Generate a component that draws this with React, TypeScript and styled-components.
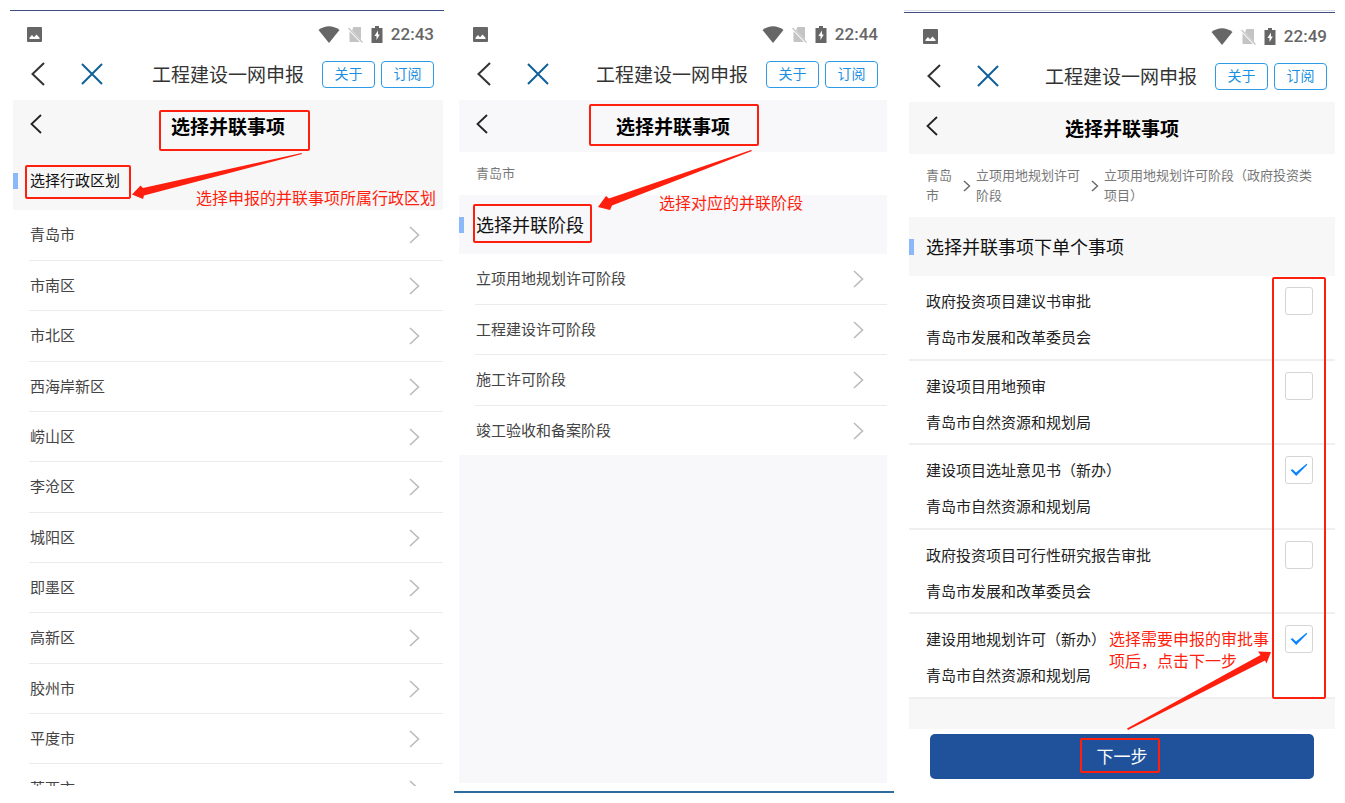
import React from "react";
import styled, { createGlobalStyle, css } from "styled-components";

const RED = "#ff1f0f";

const GlobalStyle = createGlobalStyle`
  * { box-sizing: border-box; }
  body {
    margin: 0;
    background: #fff;
    font-family: Roboto, "Noto Sans CJK SC", sans-serif;
    color: #222;
  }
  button { font: inherit; margin: 0; padding: 0; border: 0; background: none; color: inherit; cursor: pointer; }
  svg { display: block; flex: none; }
`;

const Page = styled.main`
  display: grid;
  grid-template-columns: 434fr 440fr 431fr;
  column-gap: 10px;
  min-height: 100vh;
  padding: 10px 10px;
`;

type Rule = "top" | "doubleTop" | "bottom";

const Frame = styled.section<{ $rule: Rule }>`
  display: flex;
  min-width: 0;
  ${({ $rule }) =>
    $rule === "top" &&
    css`
      border-top: 1px solid #3f4f82;
      padding: 0 1px 0 3px;
    `}
  ${({ $rule }) =>
    $rule === "doubleTop" &&
    css`
      border-top: 1px solid #dcdce4;
      padding: 2px 0 0 5px;
      background: linear-gradient(#3f4f82, #3f4f82) 0 1px / 100% 1px no-repeat;
    `}
  ${({ $rule }) =>
    $rule === "bottom" &&
    css`
      border-bottom: 2px solid #2d6c9f;
      padding: 1px 7px 8px 5px;
    `}
`;

const Phone = styled.div<{ $tint: string; $edge: number }>`
  --tint: ${({ $tint }) => $tint};
  --edge: ${({ $edge }) => $edge}px;
  position: relative;
  display: flex;
  flex-direction: column;
  flex: 1;
  min-width: 0;
`;

const StatusBar = styled.div`
  display: flex;
  align-items: center;
  height: 46px;
  padding: 0 var(--edge) 0 14px;
  color: #666;
`;

const StatusIcons = styled.div`
  display: flex;
  align-items: center;
  gap: 8px;
  margin-left: auto;
`;

const Clock = styled.time`
  font: 500 17px/20px Roboto, sans-serif;
`;

const NavBar = styled.nav`
  display: flex;
  align-items: center;
  height: 43px;
  padding: 0 var(--edge) 9px 18px;
`;

const IconButton = styled.button`
  display: flex;
  & + & { margin-left: 36px; }
`;

const AppTitle = styled.span`
  margin: 0 18px 0 auto;
  padding-top: 3px;
  font-size: 19px;
  line-height: 28px;
  color: #333;
  white-space: nowrap;
`;

const PillButton = styled.button`
  width: 53px;
  height: 27px;
  border: 1px solid #2d9be6;
  border-radius: 4px;
  color: #1d8fe0;
  font-size: 14px;
  line-height: 25px;
  & + & { margin-left: 6px; }
`;

const PageHeader = styled.header`
  display: grid;
  grid-template-columns: 1fr auto 1fr;
  align-items: center;
  height: 52px;
  padding: 0 17px;
  background: var(--tint);
`;

const BackButton = styled.button`
  justify-self: start;
  padding-bottom: 4px;
`;

const PageTitle = styled.h1`
  position: relative;
  margin: 0;
  padding-top: 4px;
  font-size: 19px;
  line-height: 28px;
  font-weight: 700;
  color: #000;
`;

const Highlight = styled.span<{ $inset: string }>`
  position: absolute;
  inset: ${({ $inset }) => $inset};
  border: 2px solid ${RED};
  border-radius: 2px;
  pointer-events: none;
`;

const Crumbs = styled.nav<{ $tall?: boolean }>`
  display: flex;
  align-items: center;
  padding: ${({ $tall }) => ($tall ? "12px 20px 11px 17px" : "12px 17px 11px")};
  font-size: 13px;
  line-height: 20px;
  color: #777;
`;

const Crumb = styled.span<{ $chars?: number }>`
  ${({ $chars }) => ($chars ? `flex: none; width: ${$chars}em;` : "flex: 1; min-width: 0;")}
`;

const CrumbArrow = styled.span`
  margin: 0 5px 0 11px;
`;

const SectionHead = styled.div<{ $large?: boolean }>`
  display: flex;
  align-items: center;
  gap: 12px;
  height: ${({ $large }) => ($large ? 59 : 58)}px;
  background: var(--tint);
  &::before {
    content: "";
    width: 5px;
    height: 16px;
    background: #8bb8f8;
  }
`;

const SectionTitle = styled.h2<{ $large?: boolean }>`
  position: relative;
  margin: 0;
  padding-top: ${({ $large }) => ($large ? 2 : 0)}px;
  font-size: ${({ $large }) => ($large ? 18 : 15)}px;
  line-height: 26px;
  font-weight: 400;
  color: #111;
`;

const List = styled.ul`
  margin: 0;
  padding: 0 0 0 16px;
  list-style: none;
`;

const ListItem = styled.li<{ $cut?: boolean }>`
  height: 50px;
  border-bottom: 1px solid #ebebeb;
  &:first-child, &:nth-child(3n) { height: 51px; }
  &:last-child {
    height: ${({ $cut }) => ($cut ? 22 : 49)}px;
    border-bottom: 0;
    overflow: hidden;
  }
`;

const RowButton = styled.button`
  display: flex;
  align-items: center;
  justify-content: space-between;
  width: 100%;
  height: 49px;
  padding: 0 23px 0 1px;
  font-size: 15px;
  line-height: 24px;
  color: #444;
`;

const Filler = styled.div`
  flex: 1;
  background: var(--tint);
`;

const Checks = styled.div`
  position: relative;
`;

const CheckRow = styled.label`
  display: flex;
  align-items: flex-start;
  justify-content: space-between;
  height: 85px;
  padding: 8px 22px 0 17px;
  border-bottom: 2px solid #efefef;
  font-size: 15px;
  line-height: 36px;
  color: #222;
  &:nth-of-type(even) { height: 84px; }
`;

const Line = styled.span`
  display: block;
`;

const CheckCell = styled.span`
  display: grid;
  margin-top: 3px;
  > * { grid-area: 1 / 1; place-self: center; }
`;

const Check = styled.input`
  appearance: none;
  width: 28px;
  height: 28px;
  margin: 0;
  border: 1px solid #d5d5d5;
  border-radius: 3px;
  background: #fff;
  & + svg { visibility: hidden; pointer-events: none; }
  &:checked + svg { visibility: visible; }
`;

const ColumnMark = styled.span`
  position: absolute;
  top: 1px;
  right: 9px;
  bottom: 0;
  width: 54px;
  border: 2px solid ${RED};
  border-radius: 2px;
  pointer-events: none;
`;

const Gap = styled.div`
  height: 30px;
  background: var(--tint);
`;

const NextButton = styled.button`
  height: 45px;
  margin: 5px 21px 0;
  border-radius: 5px;
  background: #20529b;
  color: #fff;
  font-size: 17px;
  line-height: 24px;
`;

const NextLabel = styled.span`
  position: relative;
`;

const Note = styled.p<{ $top: number; $left?: number; $right?: number; $width?: number }>`
  position: absolute;
  top: ${({ $top }) => $top}px;
  ${({ $left }) => $left !== undefined && `left: ${$left}px;`}
  ${({ $right }) => $right !== undefined && `right: ${$right}px;`}
  ${({ $width }) => $width !== undefined && `width: ${$width}px;`}
  margin: 0;
  font-size: 16px;
  line-height: 22px;
  color: ${RED};
`;

const Arrow = styled.svg<{ $top: number; $left?: number; $right?: number }>`
  position: absolute;
  top: ${({ $top }) => $top}px;
  ${({ $left }) => $left !== undefined && `left: ${$left}px;`}
  ${({ $right }) => $right !== undefined && `right: ${$right}px;`}
  fill: ${RED};
  pointer-events: none;
`;

const Chevron = ({ w, h, color, back, stroke = 2 }: { w: number; h: number; color: string; back?: boolean; stroke?: number }) => (
  <svg width={w} height={h} viewBox={`0 0 ${w} ${h}`} fill="none" stroke={color} strokeWidth={stroke} aria-hidden="true">
    <path d={back ? `M${w - 1} 1L1.5 ${h / 2}L${w - 1} ${h - 1}` : `M1 1L${w - 1.5} ${h / 2}L1 ${h - 1}`} />
  </svg>
);

const Status = ({ time }: { time: string }) => (
  <StatusBar>
    <svg width="15" height="15" viewBox="0 0 15 15" aria-hidden="true">
      <rect width="15" height="15" rx="1" fill="#666" />
      <path d="M2.5 12V10.8L5 8L7 10.2L9.5 7.4L12.5 10.8V12Z" fill="#fff" />
    </svg>
    <StatusIcons>
      <svg width="22" height="17" viewBox="0 0 22 17" aria-hidden="true">
        <path d="M11 17L0.5 4Q11 -3.5 21.5 4Z" fill="#666" />
      </svg>
      <svg width="15" height="17" viewBox="0 0 15 17" aria-hidden="true">
        <path d="M5.5 1H13V14L4 4.2Z" fill="#c4c4c4" />
        <path d="M1.5 5.2L11.8 16H2.3Q1.5 16 1.5 15.2Z" fill="#c4c4c4" />
        <path d="M0.5 2L14.5 16.5" stroke="#c4c4c4" strokeWidth="1.2" />
      </svg>
      <svg width="12" height="17" viewBox="0 0 12 17" aria-hidden="true">
        <path d="M4 0H8V2H11.5V17H0.5V2H4Z" fill="#666" />
        <path d="M7 4.6L3.4 10H5.5V14L8.8 8.6H7Z" fill="#fff" />
      </svg>
      <Clock>{time}</Clock>
    </StatusIcons>
  </StatusBar>
);

const Top = ({ time, titleInset }: { time: string; titleInset?: string }) => (
  <>
    <Status time={time} />
    <NavBar>
      <IconButton aria-label="返回">
        <Chevron w={14} h={24} color="#333" back />
      </IconButton>
      <IconButton aria-label="关闭">
        <svg width="22" height="22" viewBox="0 0 22 22" stroke="#0f6199" strokeWidth="2" aria-hidden="true">
          <path d="M1 1L21 21M21 1L1 21" />
        </svg>
      </IconButton>
      <AppTitle>工程建设一网申报</AppTitle>
      <PillButton>关于</PillButton>
      <PillButton>订阅</PillButton>
    </NavBar>
    <PageHeader>
      <BackButton aria-label="返回上一级">
        <Chevron w={12} h={20} color="#222" back stroke={1.8} />
      </BackButton>
      <PageTitle>
        选择并联事项
        {titleInset && <Highlight $inset={titleInset} />}
      </PageTitle>
    </PageHeader>
  </>
);

const Rows = ({ items, cut }: { items: string[]; cut?: boolean }) => (
  <List>
    {items.map((name) => (
      <ListItem key={name} $cut={cut}>
        <RowButton>
          {name}
          <Chevron w={11} h={18} color="#bbb" stroke={1.6} />
        </RowButton>
      </ListItem>
    ))}
  </List>
);

const districts = ["青岛市", "市南区", "市北区", "西海岸新区", "崂山区", "李沧区", "城阳区", "即墨区", "高新区", "胶州市", "平度市", "莱西市"];
const stages = ["立项用地规划许可阶段", "工程建设许可阶段", "施工许可阶段", "竣工验收和备案阶段"];
const matters = [
  { name: "政府投资项目建议书审批", office: "青岛市发展和改革委员会", checked: false },
  { name: "建设项目用地预审", office: "青岛市自然资源和规划局", checked: false },
  { name: "建设项目选址意见书（新办）", office: "青岛市自然资源和规划局", checked: true },
  { name: "政府投资项目可行性研究报告审批", office: "青岛市发展和改革委员会", checked: false },
  { name: "建设用地规划许可（新办）", office: "青岛市自然资源和规划局", checked: true },
];

export default function App() {
  return (
    <>
      <GlobalStyle />
      <Page>
        <Frame $rule="top">
          <Phone $tint="#f7f7f7" $edge={9}>
            <Top time="22:43" titleInset="0 -25px -9px -12px" />
            <SectionHead>
              <SectionTitle>
                选择行政区划
                <Highlight $inset="-3px -11px -5px -5px" />
              </SectionTitle>
            </SectionHead>
            <Rows items={districts} cut />
            <Note $top={177} $right={7}>选择申报的并联事项所属行政区划</Note>
            <Arrow $top={141} $left={118} width="172" height="48" viewBox="0 0 172 48">
              <path d="M1 42.5L9.5 33.5L12 36L170.5 1L171 2L13 43.5L12 47Z" />
            </Arrow>
          </Phone>
        </Frame>

        <Frame $rule="bottom">
          <Phone $tint="#f8f7fa" $edge={9}>
            <Top time="22:44" titleInset="-6px -29px -4px -27px" />
            <Crumbs>
              <Crumb>青岛市</Crumb>
            </Crumbs>
            <SectionHead $large>
              <SectionTitle $large>
                选择并联阶段
                <Highlight $inset="-7px -8px -4px -3px" />
              </SectionTitle>
            </SectionHead>
            <Rows items={stages} />
            <Filler />
            <Note $top={182} $left={200}>选择对应的并联阶段</Note>
            <Arrow $top={138} $left={138} width="156" height="62" viewBox="0 0 156 62">
              <path d="M1 58L9 47L12 49.5L154 1L155 2L15 56.5L13 61Z" />
            </Arrow>
          </Phone>
        </Frame>

        <Frame $rule="doubleTop">
          <Phone $tint="#f7f7f7" $edge={8}>
            <Top time="22:49" />
            <Crumbs $tall>
              <Crumb $chars={2}>青岛市</Crumb>
              <CrumbArrow>
                <Chevron w={8} h={12} color="#666" stroke={1.4} />
              </CrumbArrow>
              <Crumb $chars={8}>立项用地规划许可阶段</Crumb>
              <CrumbArrow>
                <Chevron w={8} h={12} color="#666" stroke={1.4} />
              </CrumbArrow>
              <Crumb>立项用地规划许可阶段（政府投资类项目）</Crumb>
            </Crumbs>
            <SectionHead $large>
              <SectionTitle $large>选择并联事项下单个事项</SectionTitle>
            </SectionHead>
            <Checks>
              {matters.map((m) => (
                <CheckRow key={m.name}>
                  <span>
                    <Line>{m.name}</Line>
                    <Line>{m.office}</Line>
                  </span>
                  <CheckCell>
                    <Check type="checkbox" defaultChecked={m.checked} />
                    <svg width="18" height="14" viewBox="0 0 18 14" fill="#0a84ff" aria-hidden="true">
                      <path d="M0.5 7L2.5 6.2L6 9.5L16.5 0.8L17.3 1.8L6.2 13Z" />
                    </svg>
                  </CheckCell>
                </CheckRow>
              ))}
              <ColumnMark />
            </Checks>
            <Gap />
            <NextButton>
              <NextLabel>
                下一步
                <Highlight $inset="-9px -12px -6px -17px" />
              </NextLabel>
            </NextButton>
            <Note $top={616} $right={62} $width={164}>选择需要申报的审批事项后，点击下一步</Note>
            <Arrow $top={638} $right={63} width="146" height="80" viewBox="0 0 146 80">
              <path d="M145 1L132 0.5L134.5 4L1 77.5L2 79L139 9.5L140.5 12.5Z" />
            </Arrow>
          </Phone>
        </Frame>
      </Page>
    </>
  );
}
